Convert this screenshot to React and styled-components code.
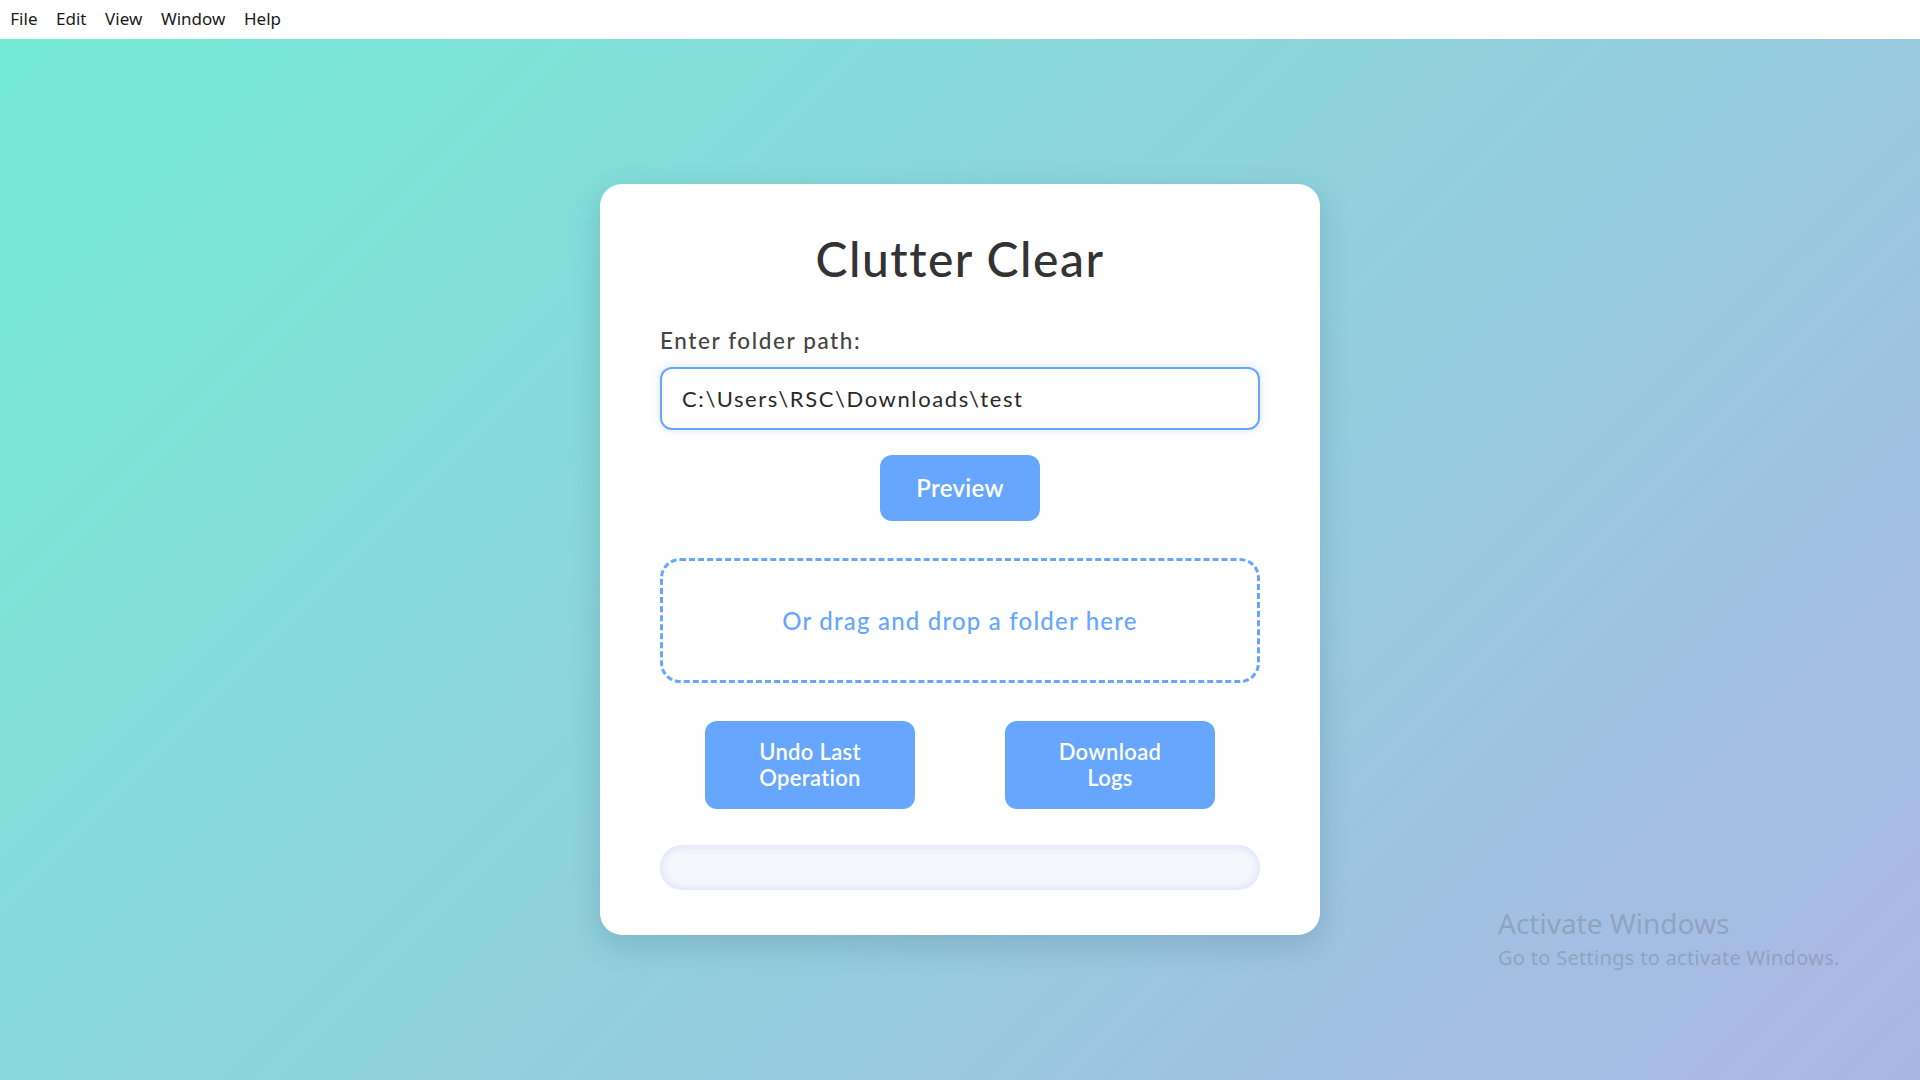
import React from "react";
import styled, { createGlobalStyle } from "styled-components";

const GlobalStyle = createGlobalStyle`
  html, body { margin: 0; padding: 0; height: 100%; }
  body { font-family: "Lato", "Noto Sans", sans-serif; }
  #root { min-height: 100vh; display: flex; flex-direction: column; }
`;

const MenuBar = styled.nav`
  height: 39px;
  background: #ffffff;
  display: flex;
  align-items: center;
  padding-left: 1px;
  font-family: "Noto Sans", "Open Sans", sans-serif;
  font-size: 17px;
  color: #1a1a1a;
  flex-shrink: 0;
`;

const MenuItem = styled.span`
  padding: 0 9.3px 2px;
`;

const Stage = styled.main`
  flex: 1;
  background: linear-gradient(135deg, #74ebd5 0%, #acb6e5 100%);
  display: flex;
  justify-content: center;
  align-items: flex-start;
  padding-top: 145px;
  position: relative;
`;

const Card = styled.section`
  width: 720px;
  box-sizing: border-box;
  background: #ffffff;
  border-radius: 22px;
  padding: 46px 60px 45px;
  box-shadow: 0 10px 30px rgba(20, 60, 90, 0.18);
  display: flex;
  flex-direction: column;
  font-family: "Lato", "Noto Sans", sans-serif;
`;

const Title = styled.h1`
  margin: 0;
  text-align: center;
  font-size: 48px;
  line-height: 58px;
  font-weight: 500;
  letter-spacing: 1.5px;
  color: #333333;
`;

const Label = styled.label`
  margin-top: 39px;
  font-size: 22.5px;
  font-weight: 500;
  letter-spacing: 1.6px;
  color: #444444;
`;

const PathInput = styled.input`
  margin-top: 13px;
  height: 63px;
  box-sizing: border-box;
  border: 2px solid #66a6ff;
  border-radius: 12px;
  padding: 0 20px;
  font-family: inherit;
  font-size: 22px;
  font-weight: 400;
  letter-spacing: 1.6px;
  color: #2a2a2a;
  outline: none;
  box-shadow: 0 0 10px rgba(102, 166, 255, 0.28);
  background: #ffffff;
`;

const PrimaryButton = styled.button`
  border: none;
  background: #66a6ff;
  color: #ffffff;
  font-family: inherit;
  font-weight: 600;
  letter-spacing: 0.3px;
  border-radius: 12px;
  cursor: pointer;
  width: ${(p) => p.$width}px;
  height: ${(p) => p.$height}px;
  font-size: ${(p) => p.$size}px;
  line-height: 26px;
  padding: 0 20px;
`;

const PreviewRow = styled.div`
  margin-top: 25px;
  display: flex;
  justify-content: center;
`;

const DropZone = styled.div`
  margin-top: 37px;
  height: 125px;
  box-sizing: border-box;
  border: 3px dashed #66a6ff;
  border-radius: 20px;
  display: flex;
  align-items: center;
  justify-content: center;
  color: #66a6ff;
  font-size: 24px;
  font-weight: 500;
  letter-spacing: 1.2px;
`;

const ActionRow = styled.div`
  margin-top: 38px;
  display: flex;
  justify-content: space-around;
`;

const Progress = styled.div`
  margin-top: 36px;
  height: 45px;
  border-radius: 22px;
  background: #f6f7fc;
  box-shadow: inset 0 0 10px rgba(110, 150, 235, 0.28);
`;

const Watermark = styled.div`
  position: absolute;
  left: 1498px;
  top: 866px;
  font-family: "Noto Sans", "Open Sans", sans-serif;
  color: rgba(120, 130, 150, 0.45);
  pointer-events: none;
`;

const WatermarkTitle = styled.div`
  font-size: 28px;
  line-height: 36px;
`;

const WatermarkSub = styled.div`
  margin-top: 4px;
  font-size: 20px;
  letter-spacing: 0.3px;
  line-height: 26px;
`;

export default function App() {
  return (
    <>
      <GlobalStyle />
      <MenuBar>
        {["File", "Edit", "View", "Window", "Help"].map((m) => (
          <MenuItem key={m}>{m}</MenuItem>
        ))}
      </MenuBar>
      <Stage>
        <Card>
          <Title>Clutter Clear</Title>
          <Label htmlFor="folder">Enter folder path:</Label>
          <PathInput
            id="folder"
            readOnly
            spellCheck={false}
            value={"C:\\Users\\RSC\\Downloads\\test"}
          />
          <PreviewRow>
            <PrimaryButton $width={160} $height={66} $size={24}>
              Preview
            </PrimaryButton>
          </PreviewRow>
          <DropZone>Or drag and drop a folder here</DropZone>
          <ActionRow>
            <PrimaryButton $width={210} $height={88} $size={22}>
              Undo Last
              <br />
              Operation
            </PrimaryButton>
            <PrimaryButton $width={210} $height={88} $size={22}>
              Download
              <br />
              Logs
            </PrimaryButton>
          </ActionRow>
          <Progress />
        </Card>
        <Watermark>
          <WatermarkTitle>Activate Windows</WatermarkTitle>
          <WatermarkSub>Go to Settings to activate Windows.</WatermarkSub>
        </Watermark>
      </Stage>
    </>
  );
}
